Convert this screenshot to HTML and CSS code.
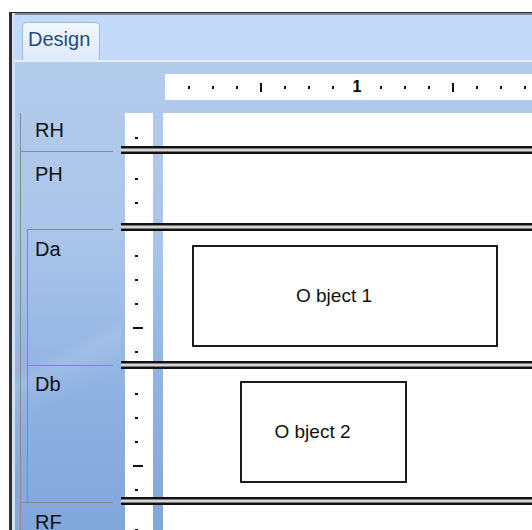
FILE: index.html
```html
<!DOCTYPE html>
<html>
<head>
<meta charset="utf-8">
<link rel="stylesheet" href="styles.css">
</head>
<body>
<div class="frame">
  <div class="tabbar"><div class="tab">Design</div></div>
  <div class="tabline"></div>
  <div class="workspace">
    <div class="hruler-row">
      <div class="hruler">
        <span></span><span></span><span></span><span class="maj"></span><span></span><span></span><span></span><span class="num">1</span><span></span><span></span><span></span><span class="maj"></span><span></span><span></span><span></span>
      </div>
    </div>
    <div class="main">
      <div class="labels">
        <div class="tree">
          <div class="sec rh">RH</div>
          <div class="sec ph">PH</div>
          <div class="grp-wrap">
            <div class="grp">
              <div class="sec inner da">Da</div>
              <div class="sec inner db">Db</div>
            </div>
          </div>
          <div class="sec rf">RF</div>
        </div>
      </div>
      <div class="canvas">
        <div class="band b-rh">
          <div class="vr"><i></i></div>
          <div class="area"></div>
        </div>
        <div class="sep"></div>
        <div class="band b-ph">
          <div class="vr"><i></i><i></i></div>
          <div class="area"></div>
        </div>
        <div class="sep"></div>
        <div class="band b-da">
          <div class="vr"><i></i><i></i><i></i><i class="maj"></i><i></i></div>
          <div class="area">
            <div class="obj obj1">O bject 1</div>
          </div>
        </div>
        <div class="sep"></div>
        <div class="band b-db">
          <div class="vr"><i></i><i></i><i></i><i class="maj"></i><i></i></div>
          <div class="area">
            <div class="obj obj2">O bject 2</div>
          </div>
        </div>
        <div class="sep"></div>
        <div class="band b-rf">
          <div class="vr"><i></i></div>
          <div class="area"></div>
        </div>
      </div>
    </div>
  </div>
</div>
</body>
</html>
```
FILE: styles.css
```css
html, body {
  margin: 0;
  height: 100%;
  background: #ffffff;
  overflow: hidden;
  font-family: "Liberation Sans", Arial, sans-serif;
}

.frame {
  box-sizing: border-box;
  margin: 12px 0 0 9px;
  height: calc(100vh - 12px);
  border-top: 1px solid #2a2a2a;
  border-left: 3px solid #303030;
  padding-left: 3px;
  background: #d3e1f3;
  display: flex;
  flex-direction: column;
}

.tabbar {
  height: 47px;
  flex: none;
  box-sizing: border-box;
  border-top: 2px solid #7f8994;
  padding: 7px 0 0 7px;
  background: #c3dafa;
  display: flex;
  align-items: flex-end;
}

.tab {
  box-sizing: border-box;
  height: 38px;
  padding: 5px 9px 0 5px;
  border: 1px solid #9dbbe3;
  border-bottom: none;
  border-radius: 5px 5px 0 0;
  background: linear-gradient(#f3f8fe, #dde9f9);
  color: #234b8b;
  font-size: 20px;
  line-height: 23px;
}

.tabline {
  height: 2px;
  flex: none;
  background: #e6f0fb;
}

.workspace {
  flex: 1;
  display: flex;
  flex-direction: column;
  min-height: 0;
  background: linear-gradient(#b4ccec 0, #aac5ea 170px, #8fb2e2 330px, #81a6da 468px);
}

.hruler-row {
  height: 51px;
  flex: none;
  box-sizing: border-box;
  padding: 12px 0 0 150px;
}

.hruler {
  height: 26px;
  background: #ffffff;
  padding-left: 12px;
  display: flex;
  align-items: center;
  overflow: hidden;
}

.hruler span {
  flex: none;
  width: 24px;
  display: flex;
  justify-content: center;
  align-items: center;
  font-size: 16px;
  font-weight: bold;
  line-height: 16px;
  color: #000;
}

.hruler span::before {
  content: "";
  width: 2px;
  height: 3px;
  background: #111;
}

.hruler span.maj::before {
  width: 2px;
  height: 9px;
}

.hruler span.num::before {
  content: none;
}

.main {
  flex: 1;
  display: flex;
  min-height: 0;
}

.labels {
  width: 106px;
  flex: none;
  box-sizing: border-box;
  padding: 0 8px 0 5px;
  background: linear-gradient(152deg, transparent 55%, rgba(255, 255, 255, 0.10) 58%, transparent 66%);
}

.tree {
  height: 100%;
  border-left: 1px solid #868b92;
}

.sec {
  box-sizing: border-box;
  font-size: 20px;
  line-height: 23px;
  color: #111;
  padding-left: 14px;
}

.sec.inner {
  padding-left: 7px;
}

.rh {
  height: 39px;
  padding-top: 6px;
  border-bottom: 1px solid #868b92;
}

.ph {
  height: 77px;
  padding-top: 11px;
}

.grp-wrap {
  border-bottom: 1px solid #868b92;
}

.grp {
  margin-left: 6px;
  border-left: 1px solid #868b92;
  border-top: 1px solid #868b92;
}

.da {
  height: 136px;
  padding-top: 8px;
  border-bottom: 1px solid #868b92;
}

.db {
  height: 136px;
  padding-top: 7px;
}

.rf {
  padding-top: 8px;
}

.canvas {
  flex: 1;
  display: flex;
  flex-direction: column;
  min-width: 0;
}

.band {
  display: flex;
  padding-left: 4px;
  flex: none;
}

.b-rh { height: 33px; }
.b-ph { height: 69px; }
.b-da { height: 130px; }
.b-db { height: 128px; }
.b-rf { flex: 1; }

.vr {
  width: 28px;
  flex: none;
  background: #ffffff;
  padding-top: 2px;
  box-sizing: border-box;
  display: flex;
  flex-direction: column;
}

.vr i {
  display: block;
  width: 3px;
  height: 2px;
  margin: 22px 0 0 10px;
  background: #111;
}

.vr i.maj {
  width: 10px;
  margin-left: 8px;
}

.area {
  flex: 1;
  margin-left: 10px;
  background: #ffffff;
  min-width: 0;
}

.sep {
  height: 8px;
  flex: none;
  background: linear-gradient(#111 0, #111 2px, #7a7a7a 2px, #7a7a7a 3px, #d4d4d4 3px, #d4d4d4 5px, #7a7a7a 5px, #7a7a7a 6px, #111 6px, #111 8px);
}

.obj {
  box-sizing: border-box;
  border: 2px solid #1b1b1b;
  padding-right: 22px;
  display: flex;
  align-items: center;
  justify-content: center;
  font-size: 19px;
  color: #111;
  white-space: pre;
}

.obj1 {
  margin: 14px 0 0 29px;
  width: 306px;
  height: 102px;
}

.obj2 {
  margin: 12px 0 0 77px;
  width: 167px;
  height: 102px;
}
```
